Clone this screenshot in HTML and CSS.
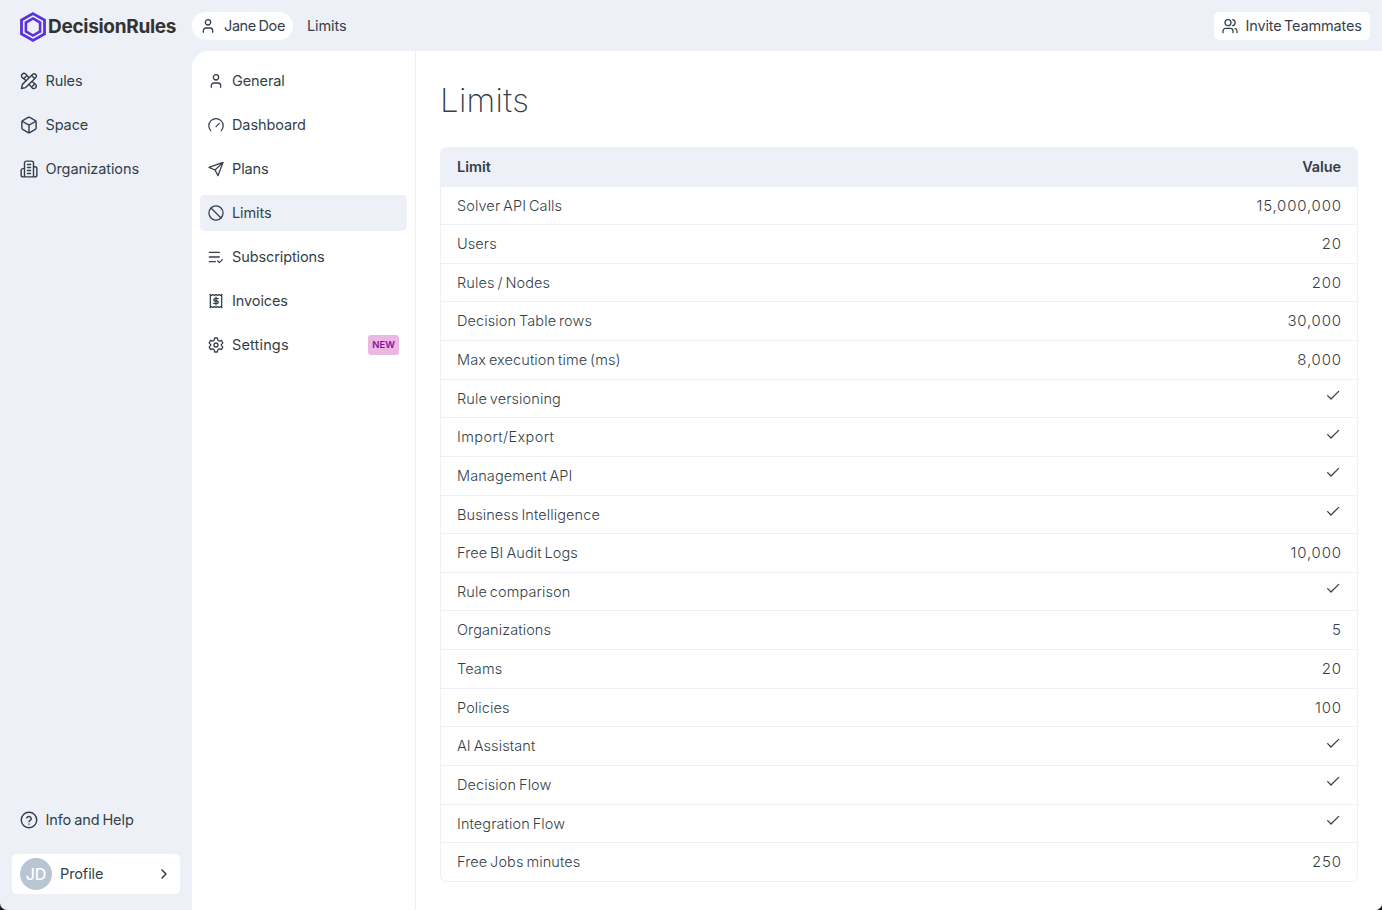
FILE: index.html
```html
<!DOCTYPE html>
<html lang="en">
<head>
<meta charset="utf-8">
<title>Limits - DecisionRules</title>
<link rel="stylesheet" href="styles.css">
</head>
<body>
<div class="app">
  <header class="topbar">
    <a class="logo">
      <svg class="logo-mark" viewBox="0 0 27 30" fill="none" stroke="#5a31e0"><path d="M13 1.600 24.500 8v14L13 28.400 1.500 22V8Z" stroke-width="2.800"/><path d="M13 6.400 20.100 10.500v9L13 23.600 5.900 19.500v-9Z" stroke-width="2.600"/></svg>
      <span class="logo-text">DecisionRules</span>
    </a>
    <div class="crumbs">
      <span class="chip"><svg class="icon s16" viewBox="0 0 24 24"><circle cx="12" cy="6.500" r="4"/><path d="M5 21.500v-2.500a4 4 0 0 1 4-4h6a4 4 0 0 1 4 4v2.500"/></svg><span>Jane Doe</span></span>
      <span class="crumb">Limits</span>
    </div>
    <button class="invite"><svg class="icon s16" viewBox="0 0 24 24"><circle cx="9" cy="7" r="4.500"/><path d="M1.500 22v-2.500a4 4 0 0 1 4-4h7a4 4 0 0 1 4 4V22M16 2.500a4.600 4.600 0 0 1 0 9M19.500 15.500a4 4 0 0 1 3 4V22"/></svg><span>Invite Teammates</span></button>
  </header>
  <div class="body">
    <aside class="sidebar">
      <nav class="main-nav">
        <a class="nav-item"><svg class="icon s18" viewBox="0 0 24 24"><path d="M7.500 11 3 7.500A3.300 3.300 0 0 1 7.500 2.700L11.500 7M16.500 13l4.500 3.800a3.300 3.300 0 0 1-4.500 4.700L12.500 17M2 22l1.200-5.500L17 3a3 3 0 0 1 4.200 4.200L7.500 20.800ZM15.500 4.800l4 4M5.500 8.500 8 6M16.500 19l2-2"/></svg><span>Rules</span></a>
        <a class="nav-item"><svg class="icon s18" viewBox="0 0 24 24"><path d="M21.500 8a2 2 0 0 0-1-1.730l-7.500-4.300a2 2 0 0 0-2 0l-7.500 4.300A2 2 0 0 0 2.500 8v8a2 2 0 0 0 1 1.730l7.500 4.300a2 2 0 0 0 2 0l7.500-4.300a2 2 0 0 0 1-1.730ZM2.800 7l9.200 5.300L21.200 7M12 22.300v-10"/></svg><span>Space</span></a>
        <a class="nav-item"><svg class="icon s18" viewBox="0 0 24 24"><path d="M6 22.500V4a2.500 2.500 0 0 1 2.500-2.500h7A2.500 2.500 0 0 1 18 4v18.500ZM6 11.500H4a2.500 2.500 0 0 0-2.500 2.500v6A2.500 2.500 0 0 0 4 22.500h2M18 9h2a2.500 2.500 0 0 1 2.500 2.500V20a2.500 2.500 0 0 1-2.500 2.500h-2M10 6h4M10 10h4M10 14h4M10 18h4"/></svg><span>Organizations</span></a>
      </nav>
      <div class="side-bottom">
        <a class="nav-item help"><svg class="icon s18" viewBox="0 0 24 24"><circle cx="12" cy="12" r="10.300"/><path d="M9 9.300a3.100 3.100 0 0 1 6 .9c0 2-3 2.600-3 4M12 17.300v.2"/></svg><span>Info and Help</span></a>
        <a class="profile"><span class="avatar">JD</span><span class="profile-name">Profile</span><svg class="icon s16 chevron" viewBox="0 0 24 24"><path d="m9 6 6 6-6 6"/></svg></a>
      </div>
    </aside>
    <div class="panel">
      <nav class="sub-nav">
        <a class="sub-item"><svg class="icon s16" viewBox="0 0 24 24"><circle cx="12" cy="6.500" r="4"/><path d="M5 21.500v-2.500a4 4 0 0 1 4-4h6a4 4 0 0 1 4 4v2.500"/></svg><span>General</span></a>
        <a class="sub-item"><svg class="icon s16" viewBox="0 0 24 24"><path d="m12 14.500 5-5M4 20.500a10.800 10.800 0 1 1 16 0"/></svg><span>Dashboard</span></a>
        <a class="sub-item"><svg class="icon s16" viewBox="0 0 24 24"><path d="M22.500 2 15 22l-4.500-8.500L1.500 9.500ZM10.500 13.500 22.500 2"/></svg><span>Plans</span></a>
        <a class="sub-item active"><svg class="icon s16" viewBox="0 0 24 24"><circle cx="12" cy="12" r="10.600"/><path d="m4.500 4.500 15 15"/></svg><span>Limits</span></a>
        <a class="sub-item"><svg class="icon s16" viewBox="0 0 24 24"><path d="M2 5h15M2 12h15M2 19h9M14.500 18l2.500 2.500 4.500-4.500"/></svg><span>Subscriptions</span></a>
        <a class="sub-item"><svg class="icon s16" viewBox="0 0 24 24"><path d="M3.500 2v20M20.500 2v20M3 2.500l2 1 2.300-1 2.300 1 2.400-1 2.400 1 2.300-1 2.300 1 2-1M3 21.500l2-1 2.300 1 2.300-1 2.400 1 2.400-1 2.300 1 2.300-1 2 1M15.500 8.300h-5a1.850 1.850 0 0 0 0 3.700h3a1.850 1.850 0 0 1 0 3.700h-5M12 6.300v11.400"/></svg><span>Invoices</span></a>
        <a class="sub-item"><svg class="icon s16" viewBox="0 0 24 24"><path d="m10 1.500h4l.8 3.300 2.300 1.400 3.200-1 1.900 3.600-2.200 2.600v1.200l2.200 2.600-1.900 3.600-3.200-1-2.300 1.400-.8 3.300h-4l-.8-3.300-2.300-1.400-3.200 1-1.900-3.600L4 12.600v-1.200L1.800 8.800l1.900-3.600 3.200 1 2.300-1.400Z"/><circle cx="12" cy="12" r="3"/></svg><span class="settings">Settings</span><span class="badge">NEW</span></a>
      </nav>
      <main class="content">
        <h1>Limits</h1>
        <section class="table">
          <div class="row head"><span>Limit</span><span class="value">Value</span></div>
          <div class="row"><span>Solver API Calls</span><span class="value">15,000,000</span></div>
          <div class="row"><span>Users</span><span class="value">20</span></div>
          <div class="row"><span>Rules / Nodes</span><span class="value">200</span></div>
          <div class="row"><span>Decision Table rows</span><span class="value">30,000</span></div>
          <div class="row"><span>Max execution time (ms)</span><span class="value">8,000</span></div>
          <div class="row"><span>Rule versioning</span><svg class="icon s16 check" viewBox="0 0 24 24"><path d="m4 13 5 5L20.500 6.500"/></svg></div>
          <div class="row"><span class="loose">Import/Export</span><svg class="icon s16 check" viewBox="0 0 24 24"><path d="m4 13 5 5L20.500 6.500"/></svg></div>
          <div class="row"><span>Management API</span><svg class="icon s16 check" viewBox="0 0 24 24"><path d="m4 13 5 5L20.500 6.500"/></svg></div>
          <div class="row"><span>Business Intelligence</span><svg class="icon s16 check" viewBox="0 0 24 24"><path d="m4 13 5 5L20.500 6.500"/></svg></div>
          <div class="row"><span>Free BI Audit Logs</span><span class="value">10,000</span></div>
          <div class="row"><span>Rule comparison</span><svg class="icon s16 check" viewBox="0 0 24 24"><path d="m4 13 5 5L20.500 6.500"/></svg></div>
          <div class="row"><span>Organizations</span><span class="value">5</span></div>
          <div class="row"><span>Teams</span><span class="value">20</span></div>
          <div class="row"><span>Policies</span><span class="value">100</span></div>
          <div class="row"><span>AI Assistant</span><svg class="icon s16 check" viewBox="0 0 24 24"><path d="m4 13 5 5L20.500 6.500"/></svg></div>
          <div class="row"><span>Decision Flow</span><svg class="icon s16 check" viewBox="0 0 24 24"><path d="m4 13 5 5L20.500 6.500"/></svg></div>
          <div class="row"><span>Integration Flow</span><svg class="icon s16 check" viewBox="0 0 24 24"><path d="m4 13 5 5L20.500 6.500"/></svg></div>
          <div class="row"><span>Free Jobs minutes</span><span class="value">250</span></div>
        </section>
      </main>
    </div>
  </div>
</div>
</body>
</html>
```
FILE: styles.css
```css
* { box-sizing: border-box; }
html { background: #16181b; }
body { margin: 0; height: 910px; overflow: hidden; color: #333f4b; font: 400 14.500px/20px Inter, "Open Sans", sans-serif; letter-spacing: -0.1px; word-spacing: -1px; }
.app { height: 910px; display: flex; flex-direction: column; background: #edf0f7; border-radius: 0 0 7px 7px; overflow: hidden; }
.icon { flex: none; fill: none; stroke: currentColor; stroke-width: 1.900; stroke-linecap: round; stroke-linejoin: round; }
.s16 { width: 16px; height: 16px; }
.s18 { width: 18px; height: 18px; }
.topbar { height: 51px; flex: none; display: flex; align-items: center; padding: 0 12px 0 20px; }
.logo { width: 172px; display: flex; align-items: center; gap: 1px; padding-top: 2px; }
.logo-mark { width: 27px; height: 30px; flex: none; }
.logo-text { font-size: 19px; font-weight: 700; letter-spacing: -0.300px; color: #333; }
.crumbs { display: flex; align-items: center; gap: 14px; }
.chip { height: 28px; width: 101px; display: flex; align-items: center; gap: 8px; padding-left: 8px; background: #fff; border-radius: 14px; white-space: nowrap; letter-spacing: -0.400px; word-spacing: -1px; }
.invite { margin-left: auto; width: 156px; height: 28px; border: 0; border-radius: 5px; background: #fff; color: inherit; font: inherit; letter-spacing: -0.150px; word-spacing: -1.500px; display: flex; align-items: center; gap: 7.500px; padding: 0 8px; white-space: nowrap; }
.body { flex: 1; min-height: 0; display: flex; }
.sidebar { width: 192px; display: flex; flex-direction: column; justify-content: space-between; padding: 12px 12px 16px; }
.main-nav, .sub-nav { display: flex; flex-direction: column; gap: 8px; }
.nav-item { height: 36px; display: flex; align-items: center; gap: 7.500px; padding-left: 8px; }
.help { margin-bottom: 16px; }
.profile { height: 40px; display: flex; align-items: center; padding: 0 8px; background: #fff; border-radius: 5px; }
.avatar { width: 32px; height: 32px; border-radius: 50%; background: #b9c5d3; color: #fff; font-size: 16px; font-weight: 500; display: grid; place-items: center; }
.profile-name { margin-left: 8px; }
.chevron { margin-left: auto; stroke-width: 2.300; }
.panel { flex: 1; min-width: 0; display: flex; background: #fff; border-top-left-radius: 16px; }
.sub-nav { width: 224px; flex: none; padding: 12px 8px; border-right: 1px solid #edf0f7; }
.sub-item { height: 36px; display: flex; align-items: center; gap: 8px; padding: 0 8px; border-radius: 5px; }
.active { background: #edf0f7; }
.settings { letter-spacing: 0.150px; }
.badge { margin-left: auto; width: 31px; height: 20px; border-radius: 3px; background: #ecb7e5; color: #8a0f9b; font-size: 9.500px; font-weight: 600; letter-spacing: 0; display: grid; place-items: center; }
.content { flex: 1; min-width: 0; padding: 27px 24px; }
h1 { margin: 0 0 25px; font-size: 33px; line-height: 44px; font-weight: 200; letter-spacing: 0.300px; }
.table { border: 1px solid #edf0f7; border-radius: 6px; overflow: hidden; font-weight: 300; letter-spacing: 0.100px; word-spacing: -1.300px; }
.row { height: 38.630px; display: flex; align-items: center; justify-content: space-between; padding: 0.500px 16px 0; border-bottom: 1px solid #edf0f7; }
.row:last-child { border-bottom: 0; height: 37.640px; }
.head { height: 38.500px; padding-top: 0; background: #edf0f7; font-weight: 600; letter-spacing: 0; }
.loose { letter-spacing: 0.400px; }
.value { font-size: 15px; letter-spacing: 0.800px; margin-right: -0.800px; }
.head .value { font-size: 14.500px; letter-spacing: -0.100px; margin-right: 0; }
.check { margin-bottom: 7px; }
```
